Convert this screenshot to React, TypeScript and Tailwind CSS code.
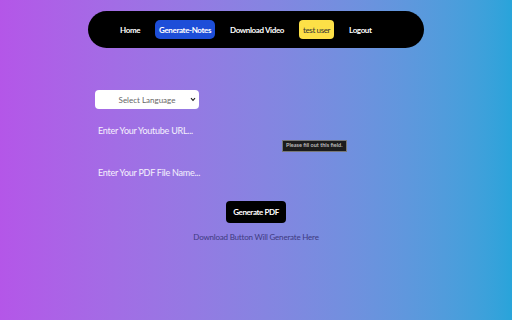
export default function App() {
  const font = { fontFamily: 'Lato, "Open Sans", sans-serif' };
  return (
    <div
      className="relative w-[512px] h-[320px] overflow-hidden bg-gradient-to-r from-[#b456e8] to-[#28a4da] flex flex-col items-center"
      style={font}
    >
      <nav className="mt-[11px] w-[336px] h-[37px] rounded-full bg-black flex items-center pl-[32px] gap-[15px] text-[8px] font-bold text-white tracking-[-0.38px]">
        <a className="leading-none">Home</a>
        <a className="h-[19px] px-[4px] rounded-[5px] bg-[#1d4ed8] flex items-center leading-none">Generate-Notes</a>
        <a className="leading-none">Download Video</a>
        <span className="h-[19px] px-[4px] rounded-[4px] bg-[#fde047] text-[#333] font-normal flex items-center leading-none">test user</span>
        <a className="leading-none">Logout</a>
      </nav>

      <div className="w-[322px] mt-[42px] flex flex-col">
        <div className="w-[104px] h-[19px] rounded-[4px] bg-white flex items-center justify-center relative text-[8px] text-[#666]">
          Select Language
          <svg className="absolute right-[3px] top-[7px]" width="6" height="5" viewBox="0 0 6 5">
            <path d="M1 1.2 L3 3.4 L5 1.2" stroke="#222" strokeWidth="1.1" fill="none" />
          </svg>
        </div>

        <div className="relative h-[20px] mt-[12px] flex items-center pl-[3px] text-[9px] text-white/90 tracking-[-0.25px]">
          Enter Your Youtube URL...
          <div className="absolute left-[187px] top-[19px] h-[12px] px-[3px] bg-[#1c1c1c] border border-[#777] flex items-center text-[5.5px] font-bold text-[#bbb] leading-none tracking-normal">
            Please fill out this field.
          </div>
        </div>

        <div className="h-[20px] mt-[22px] flex items-center pl-[3px] text-[9px] text-white/90 tracking-[-0.25px]">
          Enter Your PDF File Name...
        </div>
      </div>

      <button className="mt-[18px] w-[60px] h-[22px] rounded-[4px] bg-black text-white text-[8px] font-bold tracking-[-0.4px]">
        Generate PDF
      </button>
      <p className="mt-[8px] text-[8px] text-[#3e3a80] tracking-[-0.2px]">Download Button Will Generate Here</p>
    </div>
  );
}
